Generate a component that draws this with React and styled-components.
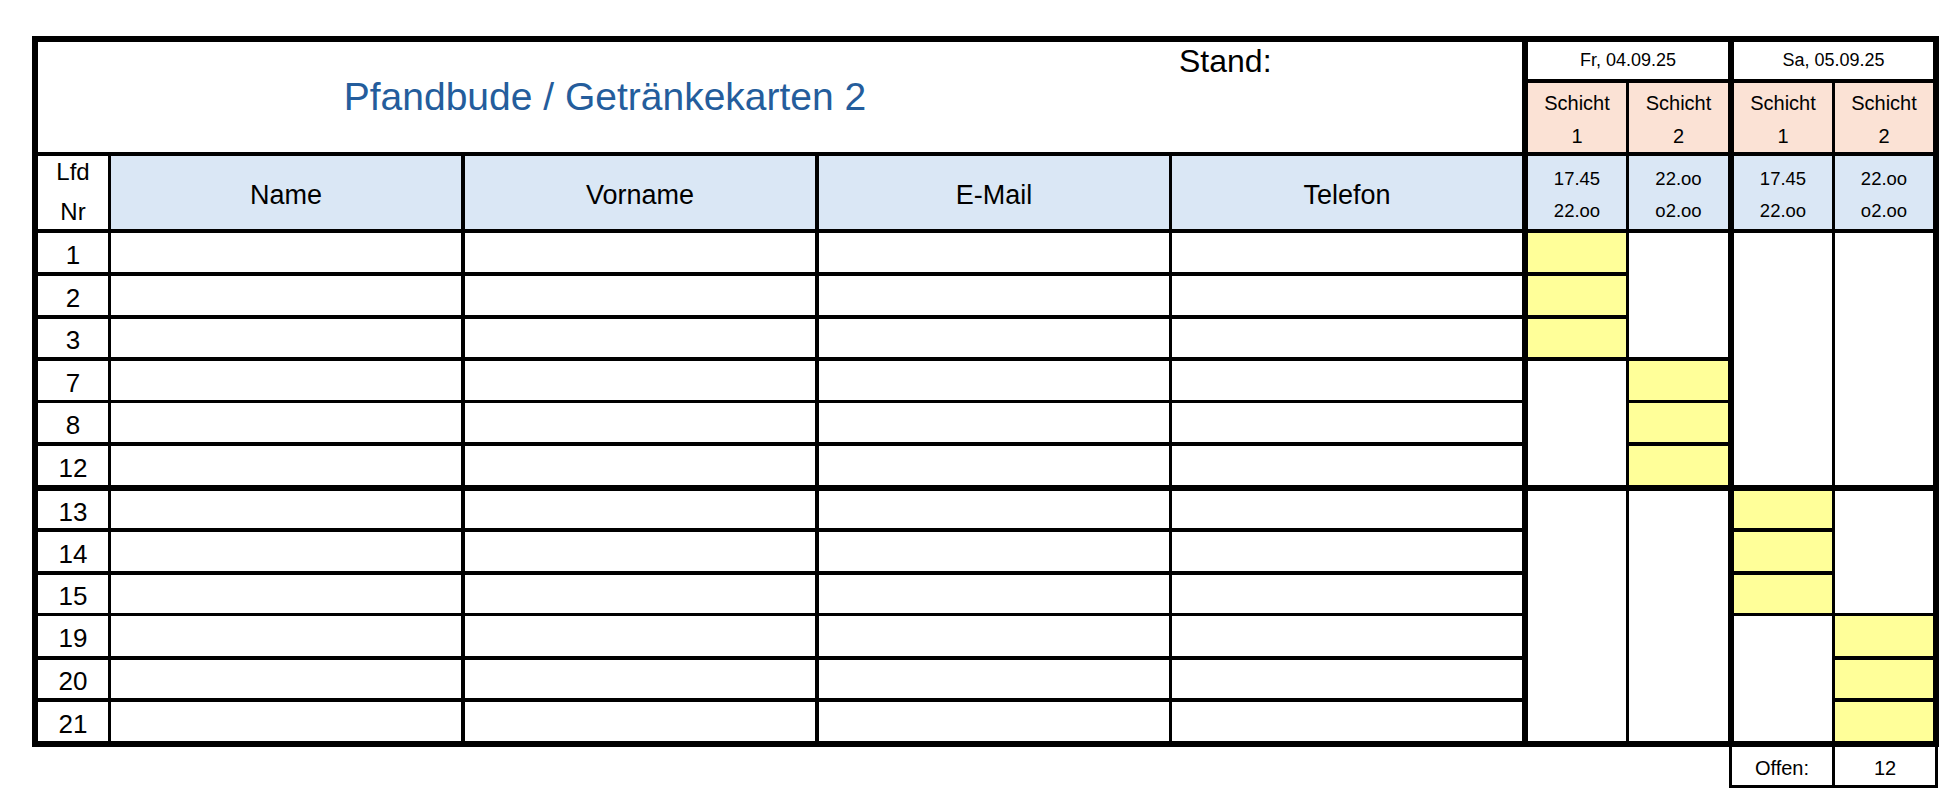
import React from "react";
import styled, { createGlobalStyle } from "styled-components";

const rows = [
  { nr: "1", h: 43, b: 4 },
  { nr: "2", h: 43, b: 4 },
  { nr: "3", h: 42, b: 4 },
  { nr: "7", h: 42, b: 3 },
  { nr: "8", h: 43, b: 4 },
  { nr: "12", h: 45, b: 6 },
  { nr: "13", h: 41, b: 4 },
  { nr: "14", h: 43, b: 4 },
  { nr: "15", h: 41, b: 3 },
  { nr: "19", h: 44, b: 4 },
  { nr: "20", h: 42, b: 4 },
  { nr: "21", h: 45, b: 6 },
];

const fields = [
  { label: "Name", r: 4 },
  { label: "Vorname", r: 4 },
  { label: "E-Mail", r: 3 },
  { label: "Telefon", r: 6 },
];

const days = [
  {
    day: "Fr, 04.09.25",
    shifts: [
      { n: "1", from: "17.45", to: "22.oo" },
      { n: "2", from: "22.oo", to: "o2.oo" },
    ],
  },
  {
    day: "Sa, 05.09.25",
    shifts: [
      { n: "1", from: "17.45", to: "22.oo" },
      { n: "2", from: "22.oo", to: "o2.oo" },
    ],
  },
];

// [first row, last row, yellow?] per shift column
const plan = [
  [[0, 0, 1], [1, 1, 1], [2, 2, 1], [3, 5, 0], [6, 11, 0]],
  [[0, 2, 0], [3, 3, 1], [4, 4, 1], [5, 5, 1], [6, 11, 0]],
  [[0, 5, 0], [6, 6, 1], [7, 7, 1], [8, 8, 1], [9, 11, 0]],
  [[0, 5, 0], [6, 8, 0], [9, 9, 1], [10, 10, 1], [11, 11, 1]],
];
const shiftRight = [3, 6, 3, 6];
const FIRST = 4; // grid row of first data row

const GlobalStyle = createGlobalStyle`
  html, body { margin: 0; padding: 0; background: #fff; }
  body {
    font-family: "Liberation Sans", Arial, sans-serif;
    color: #000;
  }
`;

const Page = styled.div`
  padding: 36px 0 0 32px;
  width: 1907px;
`;

const Sheet = styled.div`
  box-sizing: border-box;
  width: 1907px;
  display: grid;
  grid-template-columns: 73px 354px 354px 353px 356px 101px 105px 101px 104px;
  grid-template-rows: 41px 73px 77px ${rows.map((r) => `${r.h}px`).join(" ")};
  border-top: 6px solid #000;
  border-left: 6px solid #000;
`;

const Cell = styled.div`
  box-sizing: border-box;
  grid-column: ${(p) => p.$col};
  grid-row: ${(p) => p.$row};
  border-right: ${(p) => p.$r || 0}px solid #000;
  border-bottom: ${(p) => p.$b || 0}px solid #000;
  background: ${(p) => p.$bg || "#fff"};
  display: flex;
  align-items: center;
  justify-content: center;
  text-align: center;
`;

const TitleCell = styled(Cell)`
  color: #245d9c;
  font-size: 39px;
`;

const StandCell = styled(Cell)`
  align-items: flex-start;
  justify-content: flex-start;
  padding: 3px 0 0 7px;
  font-size: 32px;
  line-height: 1;
`;

const DateCell = styled(Cell)`
  font-size: 18px;
`;

const ShiftCell = styled(Cell)`
  background: #fbe2d5;
  font-size: 20px;
  line-height: 33px;
  padding-top: 4px;
`;

const HeadCell = styled(Cell)`
  background: #dae7f5;
  font-size: 27px;
  padding-top: 5px;
`;

const LfdCell = styled(Cell)`
  font-size: 24px;
  line-height: 40px;
  padding-bottom: 1px;
`;

const TimeCell = styled(Cell)`
  background: #dae7f5;
  font-size: 18.5px;
  line-height: 31.5px;
  padding-top: 4px;
`;

const NrCell = styled(Cell)`
  font-size: 26px;
  padding-top: 5px;
`;

const SlotCell = styled(Cell)`
  background: ${(p) => (p.$on ? "#ffff99" : "#fff")};
`;

const Footer = styled.div`
  display: flex;
  justify-content: flex-end;
  padding-right: 1px;
`;

const Tally = styled.div`
  display: grid;
  grid-template-columns: 103px 100px;
  height: 41px;
  box-sizing: border-box;
  border: 3px solid #000;
  border-top: 0;
`;

const TallyCell = styled.div`
  display: flex;
  align-items: center;
  justify-content: center;
  padding-top: 4px;
  font-size: 20px;
  border-right: ${(p) => (p.$divider ? "3px solid #000" : "0")};
`;

export default function App() {
  return (
    <>
      <GlobalStyle />
      <Page>
        <Sheet>
          <TitleCell $col="1 / 5" $row="1 / 3" $b={4}>
            Pfandbude / Getränkekarten 2
          </TitleCell>
          <StandCell $col="5" $row="1 / 3" $r={6} $b={4}>
            Stand:
          </StandCell>
          {days.map((d, i) => (
            <DateCell key={d.day} $col={`${6 + i * 2} / span 2`} $row="1" $r={6} $b={4}>
              {d.day}
            </DateCell>
          ))}
          {days.flatMap((d, i) =>
            d.shifts.map((s, j) => (
              <ShiftCell key={`s${i}${j}`} $col={6 + i * 2 + j} $row="2" $r={shiftRight[i * 2 + j]} $b={4}>
                Schicht
                <br />
                {s.n}
              </ShiftCell>
            ))
          )}

          <LfdCell $col="1" $row="3" $r={3} $b={4}>
            Lfd
            <br />
            Nr
          </LfdCell>
          {fields.map((f, i) => (
            <HeadCell key={f.label} $col={2 + i} $row="3" $r={f.r} $b={4}>
              {f.label}
            </HeadCell>
          ))}
          {days.flatMap((d, i) =>
            d.shifts.map((s, j) => (
              <TimeCell key={`t${i}${j}`} $col={6 + i * 2 + j} $row="3" $r={shiftRight[i * 2 + j]} $b={4}>
                {s.from}
                <br />
                {s.to}
              </TimeCell>
            ))
          )}

          {rows.map((row, i) => (
            <React.Fragment key={row.nr}>
              <NrCell $col="1" $row={FIRST + i} $r={3} $b={row.b}>
                {row.nr}
              </NrCell>
              {fields.map((f, k) => (
                <Cell key={f.label} $col={2 + k} $row={FIRST + i} $r={f.r} $b={row.b} />
              ))}
            </React.Fragment>
          ))}

          {plan.map((segments, c) =>
            segments.map(([from, to, on]) => (
              <SlotCell
                key={`${c}-${from}`}
                $col={6 + c}
                $row={`${FIRST + from} / ${FIRST + to + 1}`}
                $r={shiftRight[c]}
                $b={rows[to].b}
                $on={on}
              />
            ))
          )}
        </Sheet>
        <Footer>
          <Tally>
            <TallyCell $divider>Offen:</TallyCell>
            <TallyCell>12</TallyCell>
          </Tally>
        </Footer>
      </Page>
    </>
  );
}
